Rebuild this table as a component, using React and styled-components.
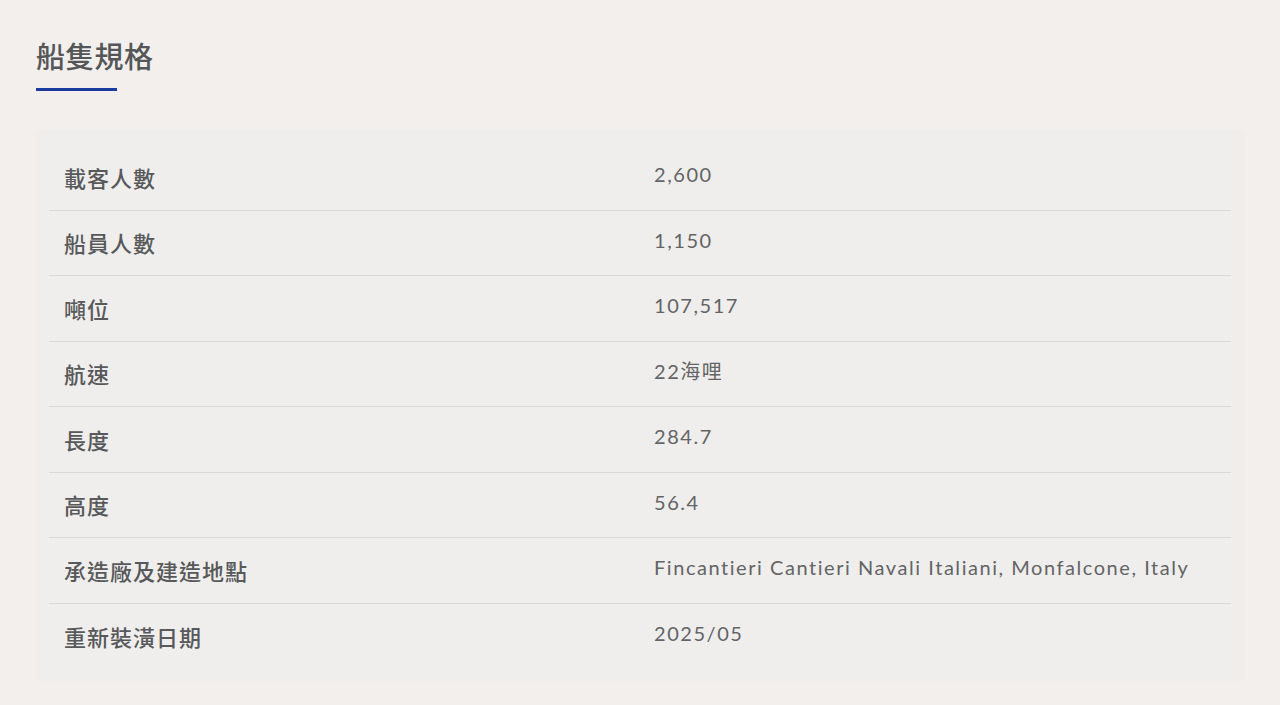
import { createGlobalStyle, styled } from "styled-components";

const specs = [
  ["載客人數", "2,600"],
  ["船員人數", "1,150"],
  ["噸位", "107,517"],
  ["航速", "22海哩"],
  ["長度", "284.7"],
  ["高度", "56.4"],
  ["承造廠及建造地點", "Fincantieri Cantieri Navali Italiani, Monfalcone, Italy"],
  ["重新裝潢日期", "2025/05"],
];

const GlobalStyle = createGlobalStyle`
  body {
    margin: 0;
    background: #f2efec;
    font-family: "Noto Sans CJK TC", "Noto Sans", sans-serif;
  }
`;

const App = () => {
  return (
    <Page>
      <GlobalStyle />
      <Title>船隻規格</Title>
      <Underline />
      <Panel>
        {specs.map(([label, value], i) => (
          <Row key={label} $last={i === specs.length - 1}>
            <Label>{label}</Label>
            <Value>{value}</Value>
          </Row>
        ))}
      </Panel>
    </Page>
  );
};

const Page = styled.div`
  padding: 34px 35px 23px 36px;
`;

const Title = styled.h2`
  margin: 0;
  font-size: 29px;
  font-weight: 500;
  line-height: 42px;
  letter-spacing: 0.3px;
  color: #555658;
`;

const Underline = styled.div`
  width: 81px;
  height: 3px;
  margin-top: 12px;
  background: #1a3c9c;
`;

const Panel = styled.div`
  margin-top: 39px;
  padding: 15px 14px 12px 13px;
  background: #efeeec;
`;

const Row = styled.div`
  display: grid;
  grid-template-columns: 1fr 1fr;
  align-items: center;
  height: 65.5px;
  border-bottom: ${(p) => (p.$last ? "none" : "1.5px solid #d9d8d6")};
  box-sizing: border-box;
`;

const Label = styled.div`
  padding: 0 15px 1px;
  font-size: 22px;
  font-weight: 500;
  letter-spacing: 1px;
  color: #58595b;
`;

const Value = styled.div`
  padding: 0 15px 6px 14px;
  font-family: "Lato", "Noto Sans CJK TC", sans-serif;
  font-size: 20px;
  letter-spacing: 1.55px;
  color: #636466;
`;

export default App;
